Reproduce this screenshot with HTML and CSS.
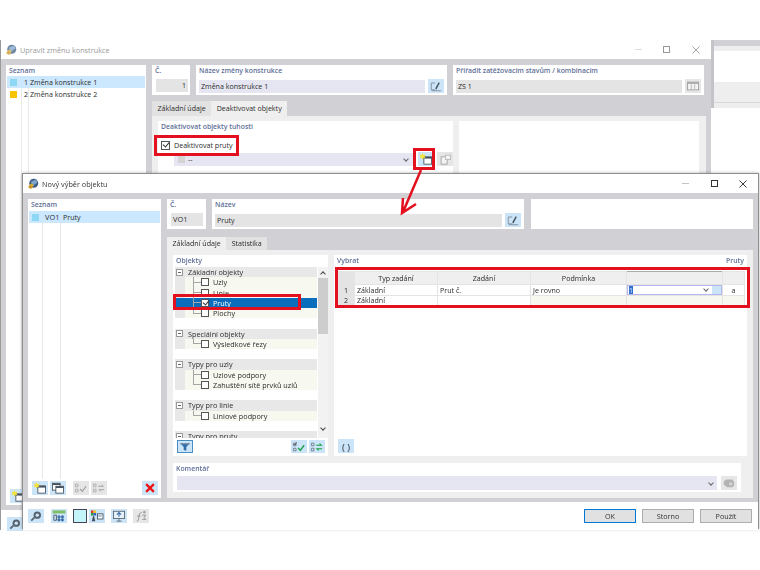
FILE: index.html
```html
<!DOCTYPE html>
<html lang="cs">
<head>
  <meta charset="UTF-8">
  <title>Nový výběr objektu</title>
  <link rel="stylesheet" href="styles.css">
</head>
<body>
  <svg class="defs" width="0" height="0">
    <symbol id="i-logo" viewBox="0 0 16 16">
      <circle cx="9" cy="7" r="6" fill="#3f5f86"/>
      <path d="M5 5l7-3 2 4-6 4z" fill="#7fa3c9"/>
      <path d="M1 12l5-5 3 3-4 4z" fill="#e0b030"/>
      <circle cx="5" cy="12" r="2.4" fill="#c8962a"/>
    </symbol>
    <symbol id="i-close" viewBox="0 0 9 9">
      <path d="M.5.500l8 8M8.500.500l-8 8" fill="none" stroke="currentColor"/>
    </symbol>
    <symbol id="i-new" viewBox="0 0 16 14">
      <rect x="5.500" y="4.500" width="9" height="8.500" fill="#fff" stroke="#44505c"/>
      <rect x="5.500" y="4.500" width="9" height="2" fill="#44505c"/>
      <path d="M4 0l1 2.400 2.500-.6-1.300 2.200 1.300 2.200L5 5.600 4 8 3 5.600l-2.500.6L1.800 4 .5 1.800l2.500.6z" fill="#f5e23c"/>
    </symbol>
    <symbol id="i-copy" viewBox="0 0 16 14">
      <rect x="1.500" y="1.500" width="9" height="8" fill="#fff" stroke="#44505c"/>
      <rect x="1.500" y="1.500" width="9" height="2" fill="#44505c"/>
      <rect x="5.500" y="5" width="9" height="8" fill="#fff" stroke="#44505c"/>
      <rect x="5.500" y="5" width="9" height="2" fill="#44505c"/>
    </symbol>
    <symbol id="i-grey-new" viewBox="0 0 16 14">
      <rect x="3.500" y="4.500" width="7" height="8.500" fill="#f4f4f4" stroke="#a0a0a0"/>
      <rect x="8.500" y="2.500" width="6" height="5" fill="#f4f4f4" stroke="#b5b5b5"/>
    </symbol>
    <symbol id="i-edit" viewBox="0 0 16 14">
      <path d="M7 3.500H2.500v8H7M3 12.500h11" fill="none" stroke="#7c8894"/>
      <path d="M7 10l4-7.500 1.500 1L8.500 11z" fill="#4a5661"/>
    </symbol>
    <symbol id="i-check" viewBox="0 0 16 14">
      <path d="M1.500 2.500h3v3h-3zM1.500 8.500h3v3h-3z" fill="none" stroke="#6e7a84"/>
      <path d="M7 8l2.500 3L14 5" fill="none" stroke="#18a048" stroke-width="1.600"/>
      <path d="M2.200 3.600l1 1 2-3" fill="none" stroke="#444"/>
    </symbol>
    <symbol id="i-swap" viewBox="0 0 16 14">
      <path d="M1.500 2.500h3v3h-3zM1.500 8.500h3v3h-3z" fill="none" stroke="#6e7a84"/>
      <path d="M7 5h6l-2-2M14 9H8l2 2" fill="none" stroke="#18a048" stroke-width="1.300"/>
    </symbol>
    <symbol id="i-check-off" viewBox="0 0 16 14">
      <path d="M1.500 2.500h3v3h-3zM1.500 8.500h3v3h-3z" fill="none" stroke="#a8a8a8"/>
      <path d="M7 8l2.500 3L14 5" fill="none" stroke="#9a9a9a" stroke-width="1.300"/>
    </symbol>
    <symbol id="i-swap-off" viewBox="0 0 16 14">
      <path d="M1.500 2.500h3v3h-3zM1.500 8.500h3v3h-3z" fill="none" stroke="#a8a8a8"/>
      <path d="M7 5h6l-2-2M14 9H8l2 2" fill="none" stroke="#9a9a9a"/>
    </symbol>
    <symbol id="i-x" viewBox="0 0 16 14">
      <path d="M3.500 2.500l9 9M12.500 2.500l-9 9" fill="none" stroke="#ee1111" stroke-width="2.600"/>
    </symbol>
    <symbol id="i-search" viewBox="0 0 16 14">
      <circle cx="9.500" cy="6" r="4.300" fill="#55626e"/>
      <circle cx="9.500" cy="6" r="2" fill="#cce4f7"/>
      <path d="M6 9l-3.500 3.500" stroke="#55626e" stroke-width="2"/>
    </symbol>
    <symbol id="i-num" viewBox="0 0 16 14">
      <rect x="0.500" y="0.500" width="15" height="3.500" fill="#7fbf6a"/>
      <circle cx="8" cy="8" r="1.800" fill="#3d6fa8"/>
      <circle cx="12" cy="8" r="1.800" fill="#3d6fa8"/>
      <circle cx="8" cy="11.500" r="1.800" fill="#3d6fa8"/>
      <circle cx="12" cy="11.500" r="1.800" fill="#3d6fa8"/>
      <path d="M2 6h3v6H2z" fill="none" stroke="#44505c"/>
    </symbol>
    <symbol id="i-colors" viewBox="0 0 16 14">
      <rect x="1" y="0.500" width="3" height="3" fill="#e23b2e"/>
      <rect x="4" y="0.500" width="3" height="3" fill="#f2c81e"/>
      <rect x="1" y="3.500" width="3" height="3" fill="#2e9e3f"/>
      <rect x="4" y="3.500" width="3" height="3" fill="#2c62c8"/>
      <path d="M2 13l1.500-6h1L6 13z" fill="#44505c"/>
      <rect x="8.500" y="4.500" width="6.500" height="6" fill="#fff" stroke="#44505c"/>
      <rect x="9.500" y="6.500" width="4" height="1" fill="#3d6fa8"/>
    </symbol>
    <symbol id="i-view" viewBox="0 0 16 14">
      <rect x="1.500" y="1.500" width="13" height="8.500" fill="#e6f1fa" stroke="#55626e"/>
      <path d="M8 3v5M5.500 5.500L8 3l2.500 2.500" fill="none" stroke="#3d6fa8" stroke-width="1.300"/>
      <path d="M8 10v3M5 13h6" stroke="#55626e"/>
    </symbol>
    <symbol id="i-fx" viewBox="0 0 16 14">
      <path d="M3 13c2 0 2-2 2.500-5S6.500 3 9 3M3.500 7h4" fill="none" stroke="#8c8c8c"/>
      <path d="M9.500 6h4l-2 2.500 2 2.500h-4" fill="none" stroke="#8c8c8c"/>
      <circle cx="12" cy="2.500" r="1.500" fill="#a8a8a8"/>
    </symbol>
    <symbol id="i-table" viewBox="0 0 16 14">
      <rect x="1.500" y="2.500" width="13" height="9" fill="#f2f2f2" stroke="#9a9a9a"/>
      <rect x="1.500" y="2.500" width="13" height="2" fill="#a8a8a8"/>
      <path d="M6 5v6M10 5v6" stroke="#b5b5b5"/>
    </symbol>
    <symbol id="i-chat" viewBox="0 0 16 14">
      <path d="M2 5l3-2h7l2 3v4l-2 2H6L2 9z" fill="#b3b3b3"/>
      <circle cx="10" cy="8" r="2" fill="#d6d6d6"/>
    </symbol>
    <symbol id="i-filter" viewBox="0 0 16 14">
      <path d="M2.500 2.500h11L9.500 7v4.500l-3-1V7z" fill="#2f6ea8"/>
      <path d="M2.500 2.500h11v1.500h-11z" fill="#7a8fa3"/>
    </symbol>
  </svg>

  <div class="desk">
    <!-- okno vzadu, vpravo kus dalsiho okna -->
    <div class="other-win">
      <div class="ow-a"></div>
      <div class="ow-b"></div>
      <div class="ow-c"></div>
      <div class="ow-d"></div>
      <div class="ow-b"></div>
    </div>

    <div class="window back">
      <div class="titlebar faded">
        <svg class="logo"><use href="#i-logo"/></svg>
        <span class="title">Upravit změnu konstrukce</span>
        <span class="winbtns">
          <span class="wb-min"></span>
          <span class="wb-max"></span>
          <svg class="wb-close"><use href="#i-close"/></svg>
        </span>
      </div>
      <div class="back-body">
        <div class="panel back-list">
          <div class="label">Seznam</div>
          <div class="list-row sel"><i class="swatch sw-blue"></i><span class="num">1</span><span>Změna konstrukce 1</span></div>
          <div class="list-row"><i class="swatch sw-yellow"></i><span class="num">2</span><span>Změna konstrukce 2</span></div>
          <div class="list-tools">
            <span class="ib"><svg><use href="#i-new"/></svg></span>
          </div>
        </div>
        <div class="back-right">
          <div class="head-row">
            <div class="panel no-box">
              <div class="label">Č.</div>
              <div class="field grey right">1</div>
            </div>
            <div class="panel name-box">
              <div class="label">Název změny konstrukce</div>
              <div class="field-line">
                <div class="field lilac">Změna konstrukce 1</div>
                <span class="ib"><svg><use href="#i-edit"/></svg></span>
              </div>
            </div>
            <div class="panel name-box">
              <div class="label">Přiřadit zatěžovacím stavům / kombinacím</div>
              <div class="field-line">
                <div class="field grey">ZS 1</div>
                <span class="ib off"><svg><use href="#i-table"/></svg></span>
              </div>
            </div>
          </div>
          <div class="tabs back-tabs">
            <span class="tab">Základní údaje</span>
            <span class="tab active">Deaktivovat objekty</span>
          </div>
          <div class="tab-page back-page">
            <div class="panel deact">
              <div class="label">Deaktivovat objekty tuhosti</div>
              <label class="check-line"><span class="cb on"></span>Deaktivovat pruty</label>
              <div class="field-line combo-line">
                <div class="field lilac combo"><i class="swatch sw-grey"></i>--<span class="chev"></span></div>
                <span class="ib"><svg><use href="#i-new"/></svg></span>
                <span class="ib off"><svg><use href="#i-grey-new"/></svg></span>
              </div>
            </div>
            <div class="panel deact-side"></div>
          </div>
        </div>
      </div>
      <div class="back-foot">
        <span class="ib"><svg><use href="#i-search"/></svg></span>
      </div>
    </div>

    <div class="window front">
      <div class="titlebar">
        <svg class="logo"><use href="#i-logo"/></svg>
        <span class="title">Nový výběr objektu</span>
        <span class="winbtns">
          <span class="wb-min"></span>
          <span class="wb-max"></span>
          <svg class="wb-close"><use href="#i-close"/></svg>
        </span>
      </div>
      <div class="front-body">
        <div class="panel front-list">
          <div class="label">Seznam</div>
          <div class="vo-rows">
            <div class="list-row sel"><i class="swatch sw-blue"></i><span class="vo">VO1</span><span>Pruty</span></div>
          </div>
          <div class="list-tools">
            <span class="ib"><svg><use href="#i-new"/></svg></span>
            <span class="ib"><svg><use href="#i-copy"/></svg></span>
            <span class="ib off gap-l"><svg><use href="#i-check-off"/></svg></span>
            <span class="ib off"><svg><use href="#i-swap-off"/></svg></span>
            <span class="ib push"><svg><use href="#i-x"/></svg></span>
          </div>
        </div>
        <div class="front-right">
          <div class="head-row">
            <div class="panel vo-no">
              <div class="label">Č.</div>
              <div class="field grey">VO1</div>
            </div>
            <div class="panel vo-name">
              <div class="label">Název</div>
              <div class="field-line">
                <div class="field grey">Pruty</div>
                <span class="ib"><svg><use href="#i-edit"/></svg></span>
              </div>
            </div>
            <div class="panel vo-blank"></div>
          </div>
          <div class="tabs front-tabs">
            <span class="tab active">Základní údaje</span>
            <span class="tab">Statistika</span>
          </div>
          <div class="tab-page front-page">
            <div class="page-top">
              <div class="panel objects">
                <div class="label">Objekty</div>
                <div class="tree-wrap">
                  <div class="tree">
                    <div class="grp"><i class="minus"></i>Základní objekty</div>
                    <div class="leaf"><i class="elbow"></i><span class="cb"></span>Uzly</div>
                    <div class="leaf"><i class="elbow"></i><span class="cb"></span>Linie</div>
                    <div class="leaf picked"><i class="elbow"></i><span class="cb on"></span>Pruty</div>
                    <div class="leaf"><i class="elbow last"></i><span class="cb"></span>Plochy</div>
                    <div class="blank"></div>
                    <div class="grp"><i class="minus"></i>Speciální objekty</div>
                    <div class="leaf"><i class="elbow last"></i><span class="cb"></span>Výsledkové řezy</div>
                    <div class="blank"></div>
                    <div class="grp"><i class="minus"></i>Typy pro uzly</div>
                    <div class="leaf"><i class="elbow"></i><span class="cb"></span>Uzlové podpory</div>
                    <div class="leaf"><i class="elbow last"></i><span class="cb"></span>Zahuštění sítě prvků uzlů</div>
                    <div class="blank"></div>
                    <div class="grp"><i class="minus"></i>Typy pro linie</div>
                    <div class="leaf"><i class="elbow last"></i><span class="cb"></span>Liniové podpory</div>
                    <div class="blank"></div>
                    <div class="grp"><i class="minus"></i>Typy pro pruty</div>
                  </div>
                  <div class="scrollbar">
                    <span class="sb-up"></span>
                    <span class="sb-thumb"></span>
                    <span class="sb-down"></span>
                  </div>
                </div>
                <div class="obj-tools">
                  <span class="ib filter"><svg><use href="#i-filter"/></svg></span>
                  <span class="ib push"><svg><use href="#i-check"/></svg></span>
                  <span class="ib"><svg><use href="#i-swap"/></svg></span>
                </div>
              </div>
              <div class="panel select">
                <div class="label-row"><span class="label">Vybrat</span><span class="label">Pruty</span></div>
                <table class="grid">
                  <tr>
                    <th class="c-n"></th>
                    <th class="c-a">Typ zadání</th>
                    <th class="c-b">Zadání</th>
                    <th class="c-c">Podmínka</th>
                    <th class="c-d"></th>
                    <th class="c-e"></th>
                  </tr>
                  <tr>
                    <th>1</th>
                    <td>Základní</td>
                    <td>Prut č.</td>
                    <td>Je rovno</td>
                    <td class="editing"><div class="cell-edit"><span class="caret-sel">1</span><span class="chev"></span><span class="mini-ib"></span></div></td>
                    <td class="mid">a</td>
                  </tr>
                  <tr>
                    <th>2</th>
                    <td>Základní</td>
                    <td></td>
                    <td class="pale"></td>
                    <td class="pale"></td>
                    <td class="pale"></td>
                  </tr>
                </table>
                <div class="sel-tools">
                  <span class="ib paren">( )</span>
                </div>
              </div>
            </div>
            <div class="panel comment">
              <div class="label">Komentář</div>
              <div class="field-line">
                <div class="field lilac combo"><span class="chev"></span></div>
                <span class="ib off"><svg><use href="#i-chat"/></svg></span>
              </div>
            </div>
          </div>
        </div>
      </div>
      <div class="front-foot">
        <span class="ib"><svg><use href="#i-search"/></svg></span>
        <span class="ib f-num"><svg><use href="#i-num"/></svg></span>
        <span class="color-box"></span>
        <span class="ib tight"><svg><use href="#i-colors"/></svg></span>
        <span class="ib"><svg><use href="#i-view"/></svg></span>
        <span class="ib off"><svg><use href="#i-fx"/></svg></span>
        <span class="btns">
          <button class="default">OK</button>
          <button>Storno</button>
          <button>Použít</button>
        </span>
      </div>
    </div>

    <!-- cervene znacky pres obrazek -->
    <div class="mark m-check"></div>
    <div class="mark m-icon"></div>
    <div class="mark m-tree"></div>
    <div class="mark m-table"></div>
    <svg class="arrow" width="760" height="570">
      <path d="M421 170L403 212M403 198l-1 15 14-9" fill="none" stroke="#e3101f" stroke-width="2.500"/>
    </svg>
  </div>
</body>
</html>
```

FILE: styles.css
```css
* {
  box-sizing: border-box;
}

body {
  margin: 0;
  background: #fff;
  font-family: "Open Sans", "Noto Sans", sans-serif;
  font-size: 7.1px;
  color: #2c2c2c;
}

.defs {
  position: absolute;
}

.desk {
  position: relative;
  width: 760px;
  height: 570px;
  overflow: hidden;
  filter: blur(0.35px);
}

/* okna */
.window {
  position: absolute;
  display: flex;
  flex-direction: column;
  background: #d0d0d5;
}

.back {
  left: 0;
  top: 40px;
  width: 711px;
  height: 490px;
  border-left: 1px solid #9a9a9a;
}

.front {
  left: 22px;
  top: 173px;
  width: 737px;
  height: 356px;
  border: 1px solid #8f8f8f;
  box-shadow: 0 0 3px rgba(0, 0, 0, 0.3);
}

.other-win {
  position: absolute;
  left: 711px;
  top: 40px;
  width: 49px;
  border-left: 3px solid #c4c4c8;
}

.ow-a {
  height: 6px;
  background: #d0d0d5;
}

.ow-b {
  height: 5px;
  background: #eee;
}

.ow-c {
  height: 31px;
  background: #fff;
}

.ow-d {
  height: 21px;
  background: #eee;
  border-bottom: 1px solid #d8d8d8;
}

.titlebar {
  display: flex;
  align-items: center;
  height: 19px;
  flex: none;
  padding-left: 4px;
  background: #fff;
}

.logo {
  width: 12px;
  height: 12px;
  margin-right: 3px;
}

.title {
  font-size: 7.3px;
  color: #333;
}

.faded .title {
  color: #999;
}

.faded .logo {
  opacity: 0.75;
}

.winbtns {
  display: flex;
  align-items: center;
  margin-left: auto;
}

.wb-min {
  width: 7px;
  height: 1px;
  background: #c4c4c4;
}

.wb-max {
  width: 7px;
  height: 7px;
  margin-left: 22px;
  border: 1px solid #333;
}

.wb-close {
  width: 8px;
  height: 8px;
  margin-left: 21px;
  margin-right: 11px;
  color: #222;
}

.faded .wb-min {
  background: #ddd;
}

.faded .wb-max {
  margin-left: 21px;
  border-color: #999;
}

.faded .wb-close {
  margin-left: 22px;
  margin-right: 11px;
  color: #999;
}

.panel {
  background: #fff;
}

.label {
  padding: 1px 3px 0;
  font-size: 6.9px;
  font-weight: 600;
  line-height: 10px;
  color: #5f6f98;
}

.field {
  flex: 1;
  height: 13px;
  padding: 0 2px;
  line-height: 13px;
}

.grey {
  background: #e4e4e4;
}

.lilac {
  background: #e6e6f2;
}

.right {
  text-align: right;
}

.field-line {
  display: flex;
  align-items: center;
  gap: 3px;
}

.ib {
  display: inline-flex;
  align-items: center;
  justify-content: center;
  flex: none;
  width: 16px;
  height: 14px;
  background: #cce4f7;
}

.ib svg {
  width: 14px;
  height: 12px;
}

.off {
  background: #e6e6e6;
}

.push {
  margin-left: auto;
}

.gap-l {
  margin-left: 6px;
}

.swatch {
  display: block;
  flex: none;
  width: 7px;
  height: 7px;
}

.sw-blue {
  background: #8fd8f5;
}

.sw-yellow {
  background: #f8c400;
}

.sw-grey {
  background: #d4d4d4;
  margin: 0 3px 0 2px;
}

.list-row {
  display: flex;
  align-items: center;
  height: 11px;
  padding-left: 3px;
  line-height: 11px;
}

.list-row.sel {
  background: #cce8ff;
}

.chev {
  flex: none;
  width: 4px;
  height: 4px;
  margin-left: auto;
  border-right: 1px solid #666;
  border-bottom: 1px solid #666;
  transform: rotate(45deg);
}

.cb {
  display: inline-block;
  position: relative;
  flex: none;
  width: 8px;
  height: 8px;
  margin-right: 4px;
  background: #fff;
  border: 1px solid #555;
}

.cb.on::after {
  content: "";
  position: absolute;
  left: 1.5px;
  top: -0.5px;
  width: 3px;
  height: 5px;
  border-right: 1px solid #333;
  border-bottom: 1px solid #333;
  transform: rotate(40deg);
}

.head-row {
  display: flex;
  height: 30px;
  gap: 6px;
  flex: none;
}

.tabs {
  display: flex;
  flex: none;
}

.tab {
  padding: 0 5.5px;
  line-height: 13px;
  background: #e2e2e2;
}

.tab.active {
  background: #efefef;
}

.tab-page {
  background: #efefef;
}

/* zadni okno */
.back-body {
  display: flex;
  flex: 1;
  gap: 6px;
  padding: 6px 5px 5px;
}

.back-list {
  display: flex;
  flex-direction: column;
  flex: none;
  width: 140px;
  background:
    linear-gradient(#e9e9e9, #e9e9e9) 15px 12px / 1px 100% no-repeat,
    linear-gradient(#e9e9e9, #e9e9e9) 22px 12px / 1px 100% no-repeat,
    #fff;
}

.back-list .list-row {
  margin: 0 1px;
}

.back-list .list-row.sel {
  height: 12px;
}

.back-list .num {
  width: 7px;
  margin-left: 4px;
  margin-right: 2px;
  text-align: right;
}

.back-list .list-row:nth-child(3) {
  margin-top: 1px;
}

.back-list .list-tools {
  margin-top: auto;
  padding: 0 0 2px 4px;
}

.back-right {
  display: flex;
  flex-direction: column;
  flex: 1;
}

.no-box {
  width: 38px;
}

.no-box .field {
  margin: 3px 2px 0 4px;
}

.name-box {
  width: 251px;
  padding-right: 3px;
}

.name-box .field-line {
  padding: 3px 0 0 3px;
}

.back-tabs {
  margin-top: 6px;
  height: 15px;
}

.back-tabs .tab {
  line-height: 15px;
}

.back-page {
  display: flex;
  flex: 1;
  gap: 6px;
  padding: 5px 6px;
}

.deact {
  width: 295px;
}

.deact-side {
  width: 240px;
}

.check-line {
  display: flex;
  align-items: center;
  height: 12px;
  margin: 7px 0 0 3px;
}

.check-line .cb {
  width: 9px;
  height: 9px;
}

.combo-line {
  margin: 1px 0 0 16px;
}

.combo {
  display: flex;
  align-items: center;
  height: 13px;
  padding-right: 7px;
}

.back-foot {
  flex: none;
  height: 20px;
  padding: 7px 0 0 6px;
  background: #fff;
}

/* predni okno */
.front-body {
  display: flex;
  flex: 1;
  gap: 6px;
  padding: 6px 5px 4px;
}

.front-list {
  display: flex;
  flex-direction: column;
  flex: none;
  width: 133px;
}

.vo-rows {
  flex: 1;
  margin: 1px 1px 0;
  background:
    linear-gradient(#e6e6e6, #e6e6e6) 13px 0 / 1px 100% no-repeat,
    linear-gradient(#e6e6e6, #e6e6e6) 31px 0 / 1px 100% no-repeat;
}

.vo-rows .list-row {
  height: 12px;
}

.vo {
  width: 18px;
  margin-left: 6px;
  font-size: 7.4px;
}

.list-tools {
  display: flex;
  gap: 2px;
  padding: 2px 3px 3px 4px;
}

.list-tools .gap-l {
  margin-left: 5px;
}

.front-right {
  display: flex;
  flex-direction: column;
  flex: 1;
}

.vo-no {
  width: 39px;
}

.vo-no .field {
  margin: 3px 3px 0 4px;
  font-size: 7.4px;
}

.vo-name {
  width: 312px;
  padding-right: 3px;
}

.vo-name .field-line {
  padding: 3px 0 0 3px;
}

.vo-blank {
  width: 222px;
  margin-left: 1px;
}

.front-tabs {
  margin-top: 8px;
  height: 13px;
}

.front-page {
  display: flex;
  flex-direction: column;
  flex: 1;
  gap: 7px;
  padding: 5px 6px 6px;
}

.page-top {
  display: flex;
  gap: 6px;
  height: 201px;
}

.objects {
  display: flex;
  flex-direction: column;
  width: 155px;
}

.objects .label {
  padding-bottom: 1px;
}

.tree-wrap {
  display: flex;
  height: 171px;
  margin: 0 0 0 2px;
  overflow: hidden;
}

.tree {
  flex: none;
  width: 142px;
}

.grp,
.leaf,
.blank {
  display: flex;
  align-items: center;
  height: 10.25px;
  font-size: 7.25px;
  line-height: 10px;
}

.grp {
  background: #e8e8e8;
}

.leaf {
  background: linear-gradient(#e8e8e8, #e8e8e8) 0 0 / 10px 100% no-repeat, #f7f8f0;
}

.leaf.picked {
  background: #0a6ebd;
  color: #fff;
}

.minus {
  position: relative;
  flex: none;
  width: 7px;
  height: 7px;
  margin: 0 5px 0 1px;
  background: #fff;
  border: 1px solid #999;
}

.minus::after {
  content: "";
  position: absolute;
  left: 1px;
  top: 2px;
  width: 3px;
  height: 1px;
  background: #666;
}

.elbow {
  flex: none;
  align-self: stretch;
  width: 8px;
  margin-left: 18px;
  background:
    linear-gradient(#a6a6a6, #a6a6a6) 0 0 / 1px 100% no-repeat,
    linear-gradient(#a6a6a6, #a6a6a6) 0 50% / 100% 1px no-repeat;
}

.elbow.last {
  background:
    linear-gradient(#a6a6a6, #a6a6a6) 0 0 / 1px 50% no-repeat,
    linear-gradient(#a6a6a6, #a6a6a6) 0 50% / 100% 1px no-repeat;
}

.scrollbar {
  display: flex;
  flex-direction: column;
  align-items: center;
  flex: none;
  width: 10px;
  margin-left: 1px;
  background: #f2f2f2;
}

.sb-up,
.sb-down {
  flex: none;
  width: 4px;
  height: 4px;
  border-left: 1px solid #444;
  border-top: 1px solid #444;
}

.sb-up {
  margin-top: 5px;
  transform: rotate(45deg);
}

.sb-down {
  margin-top: auto;
  margin-bottom: 8px;
  transform: rotate(225deg);
}

.sb-thumb {
  width: 10px;
  height: 56px;
  margin-top: 2px;
  background: #cdcdcd;
}

.obj-tools {
  display: flex;
  align-items: center;
  gap: 2px;
  padding: 2px 3px 0 4px;
}

.filter {
  height: 13px;
  border: 1px solid #4a8cc4;
}

.obj-tools .ib {
  height: 13px;
}

.select {
  display: flex;
  flex-direction: column;
  width: 413px;
}

.label-row {
  display: flex;
  justify-content: space-between;
  height: 16px;
}

.grid {
  width: 408px;
  margin-left: 3px;
  border-collapse: collapse;
  table-layout: fixed;
  font-size: 7.1px;
}

.grid th,
.grid td {
  height: 10px;
  padding: 0 2px;
  border: 1px solid #e4e4e4;
  line-height: 9px;
}

.grid tr:first-child th {
  height: 13px;
  font-weight: 400;
  background: #efefef;
}

.grid tr:first-child .c-d {
  border-top: 1px solid #aaa;
}

.grid tr th:first-child {
  background: #e4e4e4;
  font-weight: 400;
}

.c-n {
  width: 17px;
}

.c-a {
  width: 83px;
}

.c-b {
  width: 93px;
}

.c-c {
  width: 96px;
}

.c-d {
  width: 96px;
}

.pale {
  background: #f7f8f0;
}

.mid {
  text-align: center;
}

.grid td.editing {
  padding: 0;
}

.cell-edit {
  display: flex;
  align-items: center;
  height: 10px;
  padding-left: 1px;
  border: 1px solid #b6b6ee;
}

.caret-sel {
  background: #2f6fd0;
  color: #dfe9ff;
  line-height: 8px;
}

.cell-edit .chev {
  margin-right: 4px;
  margin-top: -2px;
}

.mini-ib {
  width: 9px;
  height: 8px;
  background: #cce4f7;
}

.sel-tools {
  margin-top: auto;
  padding: 0 0 3px 4px;
}

.paren {
  font-size: 9px;
  font-weight: 600;
  color: #44505c;
}

.comment {
  width: 568px;
  height: 29px;
}

.comment .field-line {
  padding: 2px 4px 0 4px;
  gap: 4px;
}

.comment .field {
  height: 14px;
  padding-right: 4px;
}

.front-foot {
  display: flex;
  align-items: center;
  flex: none;
  height: 28px;
  padding: 0 6px 0 5px;
  gap: 6px;
  background: #fff;
}

.f-num {
  margin-left: 1px;
}

.color-box {
  flex: none;
  width: 14px;
  height: 14px;
  background: #c4f5fa;
  border: 1px solid #445;
}

.front-foot .tight {
  margin-left: -4px;
}

.btns {
  display: flex;
  gap: 6px;
  margin-left: auto;
}

.btns button {
  width: 52px;
  height: 14px;
  padding: 0;
  background: #e1e1e1;
  border: 1px solid #adadad;
  font-family: inherit;
  font-size: 7.2px;
  line-height: 12px;
  color: #333;
}

.btns .default {
  border: 1px solid #0078d7;
}

/* cervene znacky */
.mark {
  position: absolute;
  border: 3px solid #e3101f;
}

.m-check {
  left: 154px;
  top: 135px;
  width: 85px;
  height: 21px;
}

.m-icon {
  left: 413px;
  top: 148px;
  width: 22px;
  height: 22px;
}

.m-tree {
  left: 173px;
  top: 294px;
  width: 128px;
  height: 16px;
}

.m-table {
  left: 335px;
  top: 267px;
  width: 415px;
  height: 41px;
}

.arrow {
  position: absolute;
  left: 0;
  top: 0;
  pointer-events: none;
}
```
